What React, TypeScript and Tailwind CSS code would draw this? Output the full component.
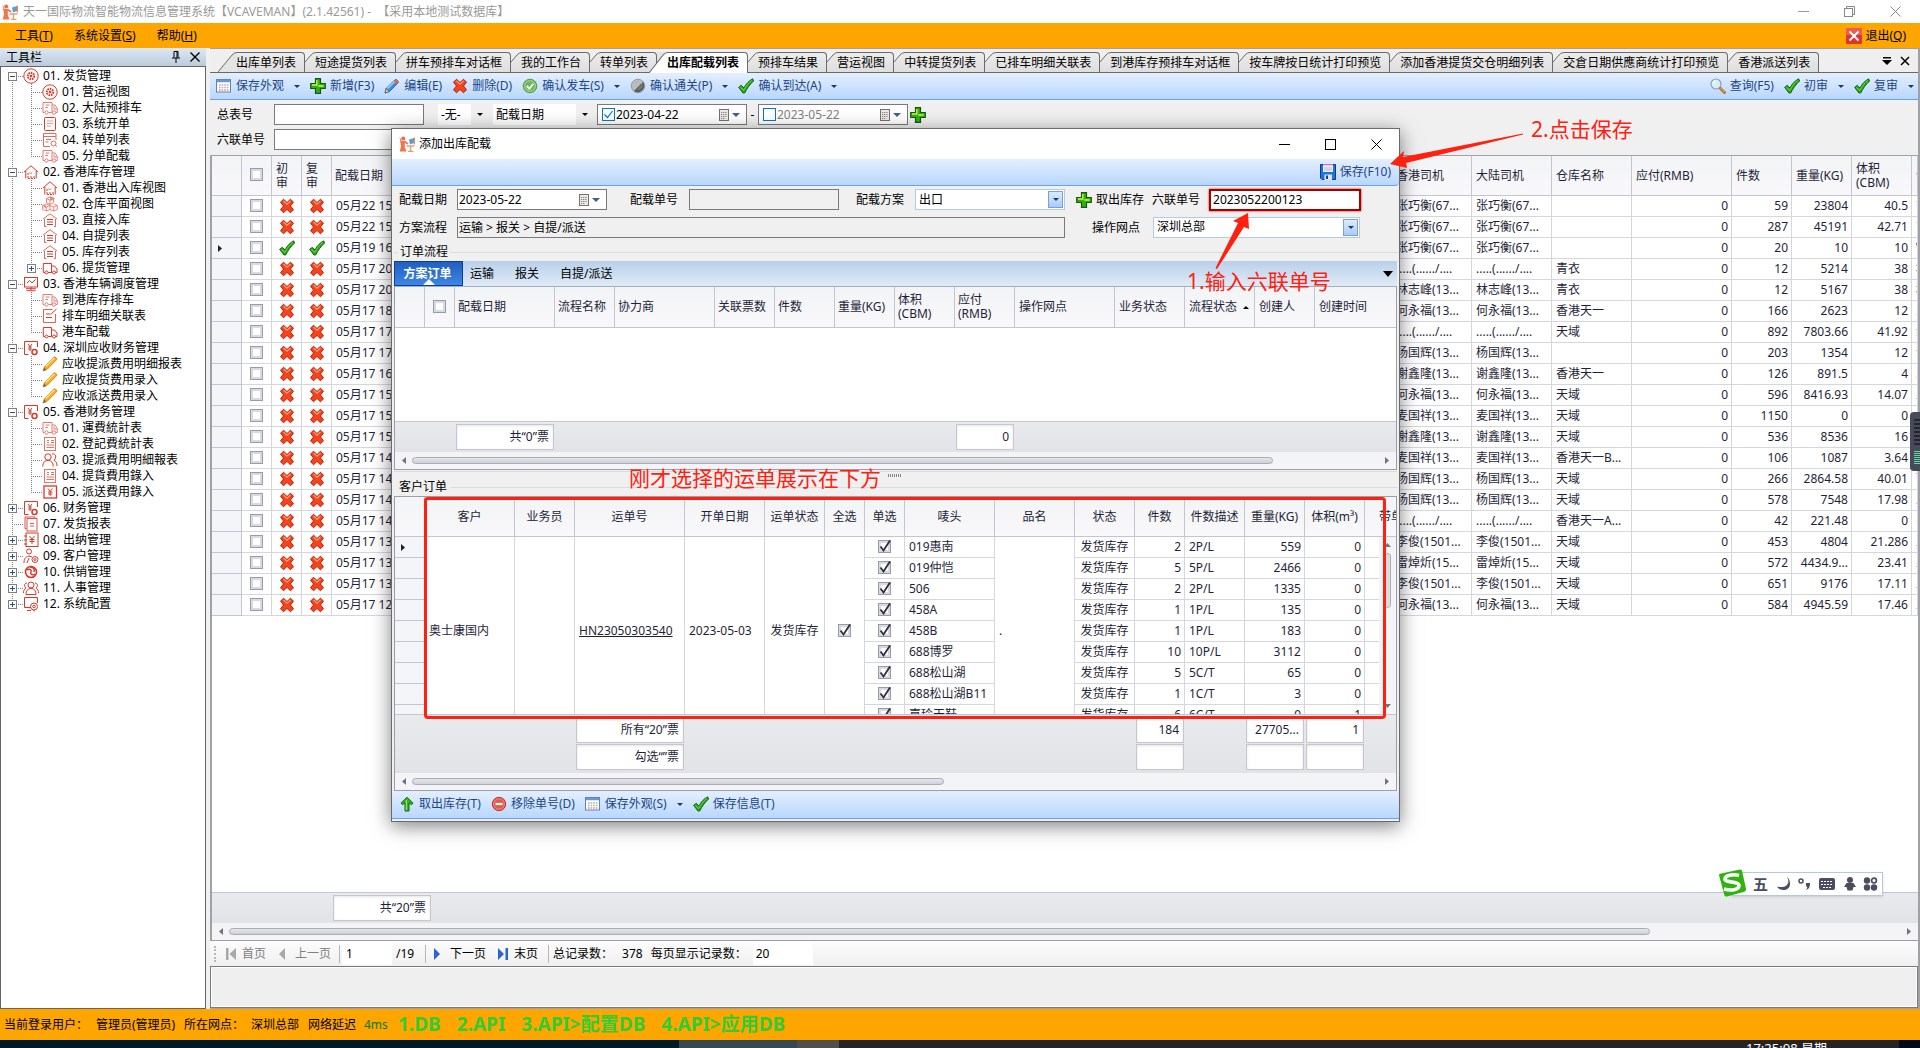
import type { ReactNode } from "react"

/* ---------- icons ---------- */

const treeShapes: Record<string, ReactNode> = {
  target: (
    <>
      <circle cx="8" cy="8" r="7.2" />
      <circle cx="8" cy="8" r="3.2" strokeWidth="2" strokeDasharray="1.6 0.8" />
      <circle cx="8" cy="8" r="1" fill="#d9392b" />
    </>
  ),
  truckList: (
    <g opacity="0.65">
      <path d="M1 12.5V2.5h9v10H6.500M1 12.500h1.500M10 5h3l2.300 3.500v4h-1.300M12 6.500v2.500h3M3.500 5h4M3.500 7.500h2.500" />
      <circle cx="4.500" cy="12.500" r="1.700" />
      <circle cx="12" cy="12.500" r="1.700" />
    </g>
  ),
  doc: (
    <>
      <rect x="2.500" y="1.500" width="11" height="13" rx="1" />
      <path d="M5 5h6M5 7.500h6M5 10h4" opacity="0.5" />
    </>
  ),
  docGear: (
    <g opacity="0.75">
      <path d="M14 8V1.500H1.500v13H8M1.500 4.500H14M4 7.500h5M3.500 10h3" />
      <circle cx="11.500" cy="11.500" r="2.500" />
      <path d="M13.500 13.500l1.500 1" />
    </g>
  ),
  house: (
    <>
      <path d="M1 8l7-6.200L15 8M2.800 7v7.500M13.200 7v7.500" />
      <path d="M5 14V9h1.500M8 14v-2M8 10V8.500M11 14v-3M5 14.500h7" strokeDasharray="2 1" />
    </>
  ),
  houseList: (
    <>
      <path d="M1 7l7-5.200L15 7M2.500 7v7.500h2M13.500 7v7.500h-1.500" opacity="0.75" />
      <path d="M5 7.500h6M5 10h6M5 12.500h6" />
    </>
  ),
  boxes: (
    <g opacity="0.6">
      <path d="M8 1l3.500 1.500v4L8 8.500 4.500 6.500v-4zM4.500 2.500L8 4.200l3.500-1.700M8 4.200v4.300M4.300 8L8 9.500v4L4.300 15 .7 13.500v-4zM11.700 8l3.600 1.500v4L11.700 15 8 13.500M.7 9.500l3.600 1.500L8 9.500l3.700 1.500 3.600-1.500M4.300 11v4M11.700 11v4" />
      <path d="M8 1l3 1.500L8 4M2 10l2 1" strokeWidth="2" />
    </g>
  ),
  truck: (
    <>
      <path d="M3 12.500H1.300V3.500h8.200v9H6M9.500 6h3l2.500 3v3.500h-1.500M9.500 12.500h1" />
      <circle cx="4.500" cy="12.500" r="1.500" />
      <circle cx="12" cy="12.500" r="1.500" />
    </>
  ),
  monitor: (
    <>
      <rect x="1.500" y="1.500" width="13" height="9.500" />
      <path d="M4 7l2.500-2.500L9 7l3.500-3.500M8 11v3M3 12.700h10M3.500 14.700h9" />
    </>
  ),
  docPen: (
    <>
      <path d="M13.500 6v8.500h-12v-13h9" opacity="0.8" />
      <path d="M4 6h4M4 9.500h6M8.500 6.500l6-5.500" />
    </>
  ),
  yuanGear: (
    <>
      <path d="M14.500 7V1.500h-13v13h4" />
      <path d="M5 4l2 2.500L9 4M7 6.500V11M5.200 7h3.600M5.200 9h3.600" />
      <circle cx="11.500" cy="12" r="2.500" strokeWidth="1.500" />
    </>
  ),
  bill: (
    <g opacity="0.7">
      <rect x="2.500" y="1.500" width="11" height="13" />
      <path d="M5 4.500h2M5 6.500h2M9 4.500h3M9 6.500h3M4.500 9h7.500M4.500 11.500h7.500" />
    </g>
  ),
  users: (
    <>
      <circle cx="6" cy="5" r="3.200" />
      <path d="M.8 14.500c0-4 2-6 5.200-6s5.200 2 5.200 6M10 2c4-1 5 4 2 6 2 1 3 3 3 6" />
    </>
  ),
  yuanBox: (
    <>
      <rect x="2" y="2" width="12.500" height="12" strokeWidth="1.300" />
      <path d="M6 4.500l2.200 3 2.200-3M8.200 7.500v4.500M6 8h4.500M6 10h4.500" />
    </>
  ),
  report: (
    <g opacity="0.85">
      <path d="M12 2V1H2v11.500h1.500" />
      <rect x="4" y="2.500" width="10" height="12.500" />
      <path d="M7 7.500h4M7 10h4" />
    </g>
  ),
  yuanBook: (
    <>
      <rect x="3" y="1" width="12" height="13.500" />
      <path d="M6.500 4l2.500 3 2.500-3M9 7v5M6.500 7.500h5M6.500 9.500h5M1 4h3M1 8h3M1 12h3" />
    </>
  ),
  userGear: (
    <>
      <circle cx="6" cy="3.500" r="2.500" />
      <path d="M1 15c0-4 1-6 5-7l3 1M4 15l2-5" />
      <circle cx="12" cy="11.500" r="3" />
      <circle cx="12" cy="11.500" r="1" />
    </>
  ),
  swirl: (
    <>
      <circle cx="8" cy="8" r="5.500" strokeWidth="1.600" />
      <path d="M4 6c3-2 5 0 4 2s1 4 4 2M7 3c3 0 5 2 4 5" strokeWidth="1.500" />
    </>
  ),
  people: (
    <>
      <circle cx="8" cy="5" r="3" />
      <path d="M3 14.500c0-4 2-6 5-6s5 2 5 6zM4 3C1 3 1 7 3 8c-2 1-2.500 3-2.500 5M12 3c3 0 3 4 1 5 2 1 2.500 3 2.500 5" />
    </>
  ),
  screenGear: (
    <>
      <path d="M14.500 7V1.500h-13v10H8M4 14.500h4" />
      <circle cx="11" cy="10.500" r="3.500" />
      <circle cx="11" cy="10.500" r="1.300" />
      <path d="M11 14v1.500M6.500 12l1-.5" />
    </>
  ),
}

function TreeIcon({ name }: { name: string }) {
  if (name === "pencil") {
    return (
      <svg className="size-4 shrink-0" viewBox="0 0 16 16">
        <path d="M1 15l1.500-4.500L12 1c1-.7 3.500 1.200 2.800 2.500L5.500 13z" fill="#f6a821" stroke="#c77d10" strokeWidth="0.7" />
        <path d="M3.500 10.500L12.500 2" stroke="#ffe08a" strokeWidth="1.400" />
        <path d="M1 15l1.200-3.500L4.500 14z" fill="#7a6a58" />
      </svg>
    )
  }
  return (
    <svg className="size-4 shrink-0" viewBox="0 0 16 16" fill="none" stroke="#d9392b" strokeWidth="1">
      {treeShapes[name]}
    </svg>
  )
}

function LogoIcon() {
  return (
    <svg className="size-4 shrink-0" viewBox="0 0 16 16">
      <circle cx="4.200" cy="2.600" r="2" fill="#ee6c45" />
      <path d="M.5.500L2.500 5h4l3 2.200-.6 1.200L5.800 7v4l1.700 4.500H.8L2 10 1 4z" fill="#f0764b" />
      <path d="M7.500 10h8M11.500 10v5M9 15.400h5.500" stroke="#f09a78" strokeWidth="1.400" />
      <path d="M10 3.500l5-1.500v5l-4 1.500z" fill="#5b9fcf" />
      <path d="M15.300 1.500v7" stroke="#ee6c45" />
    </svg>
  )
}

function CalendarIcon() {
  return (
    <svg className="size-4 shrink-0" viewBox="0 0 16 16">
      <rect x="0.500" y="1.500" width="14" height="12.500" fill="#fff" stroke="#5f83b5" />
      <path d="M1 3h13" stroke="#6f97cf" strokeWidth="2.500" />
      <path d="M3 7h10" stroke="#8fb5e6" strokeWidth="1.600" strokeDasharray="1.600 1" />
      <path d="M3 9.500h10" stroke="#e0b060" strokeWidth="1.600" strokeDasharray="1.600 1" />
      <path d="M3 12h10" stroke="#c58fb8" strokeWidth="1.600" strokeDasharray="1.600 1" />
    </svg>
  )
}

function PlusIcon() {
  return (
    <svg className="size-4 shrink-0" viewBox="0 0 16 16">
      <path d="M5.500.7h5v4.800h4.800v5h-4.800v4.800h-5v-4.800H.7v-5h4.800z" fill="#2fae1d" stroke="#17590c" strokeWidth="1.200" />
      <path d="M6.800 2v5H2M8.200 8h5.500" stroke="#d4f23a" strokeWidth="1.400" fill="none" />
    </svg>
  )
}

function CrossIcon() {
  return (
    <svg className="size-4 shrink-0" viewBox="0 0 16 16">
      <path
        d="M4.500 1.200L8 4.500l3.500-3.300 3 3L11.500 8l3 3.800-3 3L8 11.500l-3.500 3.300-3-3L4.500 8l-3-3.800z"
        fill="#f5431b"
        stroke="#a01c08"
        strokeWidth="0.900"
        strokeLinejoin="round"
      />
      <path d="M4.500 3L8 6.200 11.500 3" stroke="#ff9d78" strokeWidth="1.200" fill="none" />
    </svg>
  )
}

function TickIcon() {
  return (
    <svg className="size-4 shrink-0" viewBox="0 0 16 16">
      <path
        d="M.6 9.300l2.700-2 2.700 2.700C8.200 5.500 11.500 2.500 14.700.8l.9 2.200C11.800 6.500 9.300 10 6.700 15H4.900z"
        fill="#2aa81a"
        stroke="#0f5c08"
        strokeWidth="0.900"
        strokeLinejoin="round"
      />
      <path d="M2.200 9.400l3.500 3C8 8 10.500 5 13.700 2.500" stroke="#6fdc4c" strokeWidth="0.900" fill="none" />
    </svg>
  )
}

function PencilIcon() {
  return (
    <svg className="size-4 shrink-0" viewBox="0 0 16 16">
      <path d="M1 15l1.200-4.500L11 1.700c1.200-.9 4 1.600 3.200 3L5.500 13.500z" fill="#3c8ee6" stroke="#1b4f98" strokeWidth="0.800" />
      <path d="M3.500 10.500l8-8" stroke="#a9d4ff" strokeWidth="1.400" />
      <path d="M11 1.700c1.200-.9 4 1.600 3.200 3l-1.400 1.300L9.700 3z" fill="#e8683c" />
      <path d="M1 15l1.200-4.300 3.100 2.800z" fill="#f3d9a6" stroke="#333" strokeWidth="0.500" />
    </svg>
  )
}

function RoundTickIcon() {
  return (
    <svg className="size-4 shrink-0" viewBox="0 0 16 16">
      <circle cx="8" cy="8" r="6.800" fill="#6bb75a" stroke="#5b9c4c" />
      <circle cx="8" cy="8" r="5.300" fill="none" stroke="#b7e0ab" strokeWidth="0.800" />
      <path d="M4.800 8l2.500 2.600 4-4.800" stroke="#fff" strokeWidth="1.900" fill="none" />
    </svg>
  )
}

function GrayBallIcon() {
  return (
    <svg className="size-4 shrink-0" viewBox="0 0 16 16">
      <circle cx="8" cy="8" r="6.800" fill="#b9bbbd" stroke="#98999b" />
      <path d="M13 4A6.500 6.500 0 0 1 4 13z" fill="#55585b" />
      <path d="M13 5c1 4-3 8-7 7.500z" fill="#77797c" />
    </svg>
  )
}

function SearchIcon() {
  return (
    <svg className="size-4 shrink-0" viewBox="0 0 16 16">
      <path d="M9.500 9.500l5 5" stroke="#b9752c" strokeWidth="3" strokeLinecap="round" />
      <path d="M10.500 10l4 4" stroke="#f0b85c" strokeWidth="1" />
      <circle cx="6" cy="6" r="5" fill="#dcebf8" stroke="#8aa0b5" strokeWidth="1.200" />
      <path d="M3 6a3 3 0 0 1 3-3" stroke="#fff" strokeWidth="1.200" fill="none" />
    </svg>
  )
}

function DiskIcon() {
  return (
    <svg className="size-4 shrink-0" viewBox="0 0 16 16">
      <path d="M.5.5h15v15H2L.5 14z" fill="#1976e0" stroke="#0b3c8c" />
      <path d="M3 0h10v8H3z" fill="#f4f0fc" />
      <path d="M3 .7h10" stroke="#d86ef0" strokeWidth="1.400" />
      <path d="M4 4h8M4 6h8" stroke="#b6b3d0" />
      <path d="M4.500 10.500h7.500V16H4.500z" fill="#dfe7f3" />
      <path d="M6 11.500h2V15H6z" fill="#0d3f96" />
    </svg>
  )
}

function UpIcon() {
  return (
    <svg className="size-4 shrink-0" viewBox="0 0 16 16">
      <path d="M8 1.200l6 6-1.700 1.500-2.300-2V15H6V6.700l-2.300 2L2 7.200z" fill="#35b51f" stroke="#14610b" />
      <path d="M7.300 4v10" stroke="#a4f07f" />
    </svg>
  )
}

function MinusIcon() {
  return (
    <svg className="size-4 shrink-0" viewBox="0 0 16 16">
      <circle cx="8" cy="8" r="6.700" fill="#e5584b" stroke="#b93b32" />
      <circle cx="8" cy="8" r="5.300" fill="none" stroke="#f39e94" strokeWidth="0.700" />
      <path d="M4.500 8h7" stroke="#fff" strokeWidth="2.200" />
    </svg>
  )
}

function Caret({ className = "text-[#1e395b]" }: { className?: string }) {
  return (
    <svg className={`h-[3px] w-1.5 shrink-0 ${className}`} viewBox="0 0 6 3" fill="currentColor">
      <path d="M0 0h6L3 3z" />
    </svg>
  )
}

function SideArrow({ dir, className = "text-[#70727e]" }: { dir: "left" | "right"; className?: string }) {
  return (
    <svg className={`h-[7px] w-1 shrink-0 ${className}`} viewBox="0 0 4 7" fill="currentColor">
      <path d={dir === "left" ? "M4 0v7L0 3.500z" : "M0 0v7l4-3.500z"} />
    </svg>
  )
}

/* ---------- small controls ---------- */

function ToolButton({ icon, label, menu }: { icon: ReactNode; label: string; menu?: boolean }) {
  return (
    <button className="flex items-center gap-1 whitespace-nowrap text-[#1c4587]">
      {icon}
      <span>{label}</span>
      {menu && (
        <span className="flex w-3 justify-end">
          <Caret />
        </span>
      )}
    </button>
  )
}

function GridCheck({ label, checked = false }: { label: string; checked?: boolean }) {
  return (
    <span className="relative mb-0.5 inline-flex align-middle">
      <input
        type="checkbox"
        aria-label={label}
        defaultChecked={checked}
        className="size-[13px] appearance-none border border-[#989bab] bg-white shadow-[inset_0_0_0_2px_#d8dae3]"
      />
      {checked && (
        <svg className="pointer-events-none absolute inset-0 size-[13px]" viewBox="0 0 13 13">
          <path d="M2.500 6.500l3 4L12 .5" stroke="#2d2d3c" strokeWidth="1.800" fill="none" />
        </svg>
      )}
    </span>
  )
}

function ScrollBar({ thumb }: { thumb: string }) {
  return (
    <div className="flex h-[18px] items-center gap-1.5 border-b border-[#9a9dab] bg-[#f4f4f7] px-[7px]">
      <SideArrow dir="left" />
      <div className="flex-1">
        <div className={`h-[7px] rounded-full border border-[#a9abb6] bg-linear-to-b from-[#e6e7eb] to-[#cfd0d8] ${thumb}`} />
      </div>
      <SideArrow dir="right" />
    </div>
  )
}

function SumBox({ children }: { children?: ReactNode }) {
  return (
    <div className="mx-px h-[26px] border border-[#c5c6ce] bg-white px-1 text-right leading-6 text-[#1f1f3a] shadow-[inset_0_1px_3px_#e4e4ea]">
      {children}
    </div>
  )
}

function DateBox({ id, label, value, check, width, dim }: { id: string; label: string; value: string; check?: boolean; width: string; dim?: boolean }) {
  return (
    <div className={`flex h-[21px] items-center border border-[#7a7a7a] bg-white ${width}`}>
      {check !== undefined && (
        <span className="relative ml-1 flex">
          <input type="checkbox" aria-label={label} defaultChecked={check} className="size-[13px] appearance-none border border-[#0078d7] bg-white" />
          {check && (
            <svg className="pointer-events-none absolute inset-0 size-[13px]" viewBox="0 0 13 13">
              <path d="M2.500 6.500l3 3L10.500 3" stroke="#0078d7" strokeWidth="1.200" fill="none" />
            </svg>
          )}
        </span>
      )}
      <input
        id={id}
        aria-label={label}
        defaultValue={value}
        className={`min-w-0 flex-1 bg-transparent pl-px text-xs outline-none ${dim ? "text-[#808080]" : "text-black"}`}
      />
      <svg className="mr-[3px] h-3.5 w-2.5" viewBox="0 0 10 14">
        <rect x="0.500" y="1.500" width="9" height="11" fill="#eceae6" stroke="#77706c" />
        <path d="M2 4.500h6M2 6.500h6M2 8.500h6M2 10.500h4" stroke="#8b8a92" strokeDasharray="1.200 0.600" />
      </svg>
      <svg className="mr-1.5 h-1 w-2" viewBox="0 0 8 4" fill="#40608c">
        <path d="M0 0h8L4 4z" />
      </svg>
    </div>
  )
}

/* ---------- left tree ---------- */

type Node = { text: string; icon: string; state?: "open" | "closed"; kids?: Node[] }

const tree: Node[] = [
  {
    text: "01. 发货管理", icon: "target", state: "open",
    kids: [
      { text: "01. 营运视图", icon: "target" },
      { text: "02. 大陆预排车", icon: "truckList" },
      { text: "03. 系统开单", icon: "doc" },
      { text: "04. 转单列表", icon: "docGear" },
      { text: "05. 分单配载", icon: "truckList" },
    ],
  },
  {
    text: "02. 香港库存管理", icon: "house", state: "open",
    kids: [
      { text: "01. 香港出入库视图", icon: "house" },
      { text: "02. 仓库平面视图", icon: "boxes" },
      { text: "03. 直接入库", icon: "houseList" },
      { text: "04. 自提列表", icon: "houseList" },
      { text: "05. 库存列表", icon: "houseList" },
      { text: "06. 提货管理", icon: "truck", state: "closed" },
    ],
  },
  {
    text: "03. 香港车辆调度管理", icon: "monitor", state: "open",
    kids: [
      { text: "到港库存排车", icon: "truckList" },
      { text: "排车明细关联表", icon: "docPen" },
      { text: "港车配载", icon: "truck" },
    ],
  },
  {
    text: "04. 深圳应收财务管理", icon: "yuanGear", state: "open",
    kids: [
      { text: "应收提派费用明细报表", icon: "pencil" },
      { text: "应收提货费用录入", icon: "pencil" },
      { text: "应收派送费用录入", icon: "pencil" },
    ],
  },
  {
    text: "05. 香港财务管理", icon: "yuanGear", state: "open",
    kids: [
      { text: "01. 運費統計表", icon: "truckList" },
      { text: "02. 登記費統計表", icon: "bill" },
      { text: "03. 提派費用明細報表", icon: "users" },
      { text: "04. 提貨費用錄入", icon: "bill" },
      { text: "05. 派送費用錄入", icon: "yuanBox" },
    ],
  },
  { text: "06. 财务管理", icon: "yuanGear", state: "closed" },
  { text: "07. 发货报表", icon: "report" },
  { text: "08. 出纳管理", icon: "yuanBook", state: "closed" },
  { text: "09. 客户管理", icon: "userGear", state: "closed" },
  { text: "10. 供销管理", icon: "swirl", state: "closed" },
  { text: "11. 人事管理", icon: "people", state: "closed" },
  { text: "12. 系统配置", icon: "screenGear", state: "closed" },
]

function Branch({ child = false, first = false, last, state }: { child?: boolean; first?: boolean; last: boolean; state?: string }) {
  const w = child ? 41 : 22
  const x = child ? 30 : 11
  return (
    <svg className={`h-4 shrink-0 ${child ? "w-[41px]" : "w-[22px]"}`} viewBox={`0 0 ${w} 16`} shapeRendering="crispEdges">
      <g stroke="#808080" strokeDasharray="1 1">
        {child && <path d="M11.500 0v16" />}
        <path d={`M${x + 0.5} ${first ? 8 : 0}V${last ? 8 : 16}`} />
        <path d={`M${x} 8.500H${w}`} />
      </g>
      {state && (
        <>
          <rect x={x - 3.5} y="4.500" width="8" height="8" fill="#fff" stroke="#808080" />
          <path d={`M${x - 2} 8.500h5`} stroke="#2a4a9c" />
          {state === "closed" && <path d={`M${x + 0.5} 6v5`} stroke="#2a4a9c" />}
        </>
      )}
    </svg>
  )
}

function Tree() {
  return (
    <ul className="text-black">
      {tree.map((n, i) => (
        <li key={n.text}>
          <div className="flex h-4 items-center whitespace-nowrap leading-4">
            <Branch first={i === 0} last={i === tree.length - 1} state={n.state} />
            <TreeIcon name={n.icon} />
            <span className="ml-1">{n.text}</span>
          </div>
          {n.kids && (
            <ul>
              {n.kids.map((k, j) => (
                <li key={k.text} className="flex h-4 items-center whitespace-nowrap leading-4">
                  <Branch child last={j === n.kids!.length - 1} state={k.state} />
                  <TreeIcon name={k.icon} />
                  <span className="ml-1">{k.text}</span>
                </li>
              ))}
            </ul>
          )}
        </li>
      ))}
    </ul>
  )
}

/* ---------- document tabs ---------- */

const tabs = [
  "出库单列表", "短途提货列表", "拼车预排车对话框", "我的工作台", "转单列表", "出库配载列表", "预排车结果", "营运视图", "中转提货列表",
  "已排车明细关联表", "到港库存预排车对话框", "按车牌按日统计打印预览", "添加香港提货交仓明细列表", "交倉日期供應商统计打印预览", "香港派送列表",
]

function DocTabs() {
  return (
    <div className="flex h-6 items-end border-b border-[#6b6b5c] bg-[#efefef] pl-4" role="tablist">
      {tabs.map((t, i) => {
        const active = t === "出库配载列表"
        const wide = active || i === 0
        return (
          <button
            key={t}
            role="tab"
            aria-selected={active}
            className={`relative flex h-5 items-center whitespace-nowrap rounded-tr-sm border-r border-t border-[#6b6b6b] pl-2.5 pr-2 leading-5 text-black ${
              active ? "-mb-px h-[21px] bg-white font-bold" : "bg-linear-to-b from-[#ececec] to-[#dedede]"
            }`}
          >
            {wide ? (
              <svg className={`absolute -left-2 -top-px w-[19px] ${active ? "h-[21px]" : "h-5"}`} viewBox="0 0 19 20" preserveAspectRatio="none">
                <path d="M8 0h11L17 2 8 12z" fill={active ? "#e4e4e4" : "#efefef"} />
                <path d="M0 20L14 3q2-2.500 5-2.500V20z" fill={active ? "#fff" : "#e4e4e4"} />
                <path d="M0 20L14 3q2-2.500 5-2.500" fill="none" stroke="#6b6b6b" />
              </svg>
            ) : (
              <svg className="absolute -top-px left-0 h-3 w-[11px]" viewBox="0 0 11 12">
                <path d="M0 0h11v.5Q8 .5 6 3L0 10z" fill="#efefef" />
                <path d="M0 10L6 3Q8 .5 11 .5" fill="none" stroke="#6b6b6b" />
              </svg>
            )}
            <span className="relative">{t}</span>
          </button>
        )
      })}
      <div className="ml-auto mr-2 flex h-full items-center gap-2">
        <svg className="h-2 w-2.5" viewBox="0 0 10 8">
          <path d="M1 0h8v1.500H1zM0 3h10L5 8z" />
        </svg>
        <svg className="size-2.5" viewBox="0 0 10 10">
          <path d="M1 1l8 8M9 1L1 9" stroke="#000" strokeWidth="1.500" />
        </svg>
      </div>
    </div>
  )
}

/* ---------- main grid ---------- */

type Row = [date: string, driver: string, store: string, qty: string, kg: string, cbm: string, tail: string]

const rows: Row[] = [
  ["05月22 15", "张巧衡(67...", "", "59", "23804", "40.5", "管"],
  ["05月22 15", "张巧衡(67...", "", "287", "45191", "42.71", "管"],
  ["05月19 16", "张巧衡(67...", "", "20", "10", "10", "W"],
  ["05月17 20", ".....(....../....", "青衣", "12", "5214", "38", "林"],
  ["05月17 20", "林志峰(13...", "青衣", "12", "5167", "38", "林"],
  ["05月17 18", "何永福(13...", "香港天一", "166", "2623", "12", "人"],
  ["05月17 17", ".....(....../....", "天域", "892", "7803.66", "41.92", "汪"],
  ["05月17 17", "杨国辉(13...", "", "203", "1354", "12", "汪"],
  ["05月17 16", "谢鑫隆(13...", "香港天一", "126", "891.5", "4", "人"],
  ["05月17 15", "何永福(13...", "天域", "596", "8416.93", "14.07", "王"],
  ["05月17 15", "麦国祥(13...", "天域", "1150", "0", "0", "王"],
  ["05月17 15", "谢鑫隆(13...", "天域", "536", "8536", "16", "王"],
  ["05月17 14", "麦国祥(13...", "香港天一B...", "106", "1087", "3.64", "王"],
  ["05月17 14", "杨国辉(13...", "天域", "266", "2864.58", "40.01", "可"],
  ["05月17 14", "杨国辉(13...", "天域", "578", "7548", "17.98", "王"],
  ["05月17 14", ".....(....../....", "香港天一A...", "42", "221.48", "0", "张"],
  ["05月17 13", "李俊(1501...", "天域", "453", "4804", "21.286", "王"],
  ["05月17 13", "雷焯炘(15...", "天域", "572", "4434.9...", "23.41", "王"],
  ["05月17 13", "李俊(1501...", "天域", "651", "9176", "17.11", "王"],
  ["05月17 12", "何永福(13...", "天域", "584", "4945.59", "17.46", "王"],
]

const th = "overflow-hidden whitespace-nowrap border-b border-r border-[#c3c5d1] bg-linear-to-b from-[#f3f4f6] to-[#f8f8fa] p-0 font-normal leading-[14px]"
const td = "h-[21px] overflow-hidden whitespace-nowrap border-b border-r border-[#d5d6de] p-0 leading-5"
const lead = "border-b border-r border-[#c3c5d1] bg-[#f4f5f8] p-0"

function RowMark() {
  return (
    <svg className="ml-1.5 h-[7px] w-1" viewBox="0 0 4 7">
      <path d="M0 0v7l4-3.500z" fill="#1f1f2a" />
    </svg>
  )
}

function MainGrid() {
  return (
    <table className="w-full table-fixed border-separate border-spacing-0 text-[#1f1f3a]">
      <colgroup>
        <col className="w-[30px]" />
        <col className="w-[30px]" />
        <col className="w-[30px]" />
        <col className="w-[30px]" />
        <col className="w-[100px]" />
        <col />
        <col className="w-[80px]" />
        <col className="w-[80px]" />
        <col className="w-[80px]" />
        <col className="w-[100px]" />
        <col className="w-[60px]" />
        <col className="w-[60px]" />
        <col className="w-[60px]" />
        <col className="w-[6px]" />
      </colgroup>
      <thead>
        <tr className="h-10 text-left">
          <th className={th} />
          <th className={`${th} text-center`}><GridCheck label="全选" /></th>
          <th className={`${th} pl-1`}>初<br />审</th>
          <th className={`${th} pl-1`}>复<br />审</th>
          <th className={`${th} pl-[3px]`}>配载日期</th>
          <th className={th} />
          <th className={`${th} pl-1`}>香港司机</th>
          <th className={`${th} pl-1`}>大陆司机</th>
          <th className={`${th} pl-1`}>仓库名称</th>
          <th className={`${th} pl-1`}>应付(RMB)</th>
          <th className={`${th} pl-1`}>件数</th>
          <th className={`${th} pl-1`}>重量(KG)</th>
          <th className={`${th} pl-1`}>体积<br />(CBM)</th>
          <th className={`${th} pl-1`}>创</th>
        </tr>
      </thead>
      <tbody>
        {rows.map(([date, driver, store, qty, kg, cbm, tail], i) => {
          const ok = i === 2
          const mark = <span className="flex justify-center">{ok ? <TickIcon /> : <CrossIcon />}</span>
          return (
            <tr key={i}>
              <td className={lead}>{ok && <RowMark />}</td>
              <td className={`${td} text-center`}><GridCheck label={`选择第${i + 1}行`} /></td>
              <td className={td}>{mark}</td>
              <td className={td}>{mark}</td>
              <td className={`${td} pl-1`}>{date}</td>
              <td className={td} />
              <td className={`${td} pl-1`}>{driver}</td>
              <td className={`${td} pl-1`}>{driver}</td>
              <td className={`${td} pl-1`}>{store}</td>
              <td className={`${td} pr-[3px] text-right`}>0</td>
              <td className={`${td} pr-[3px] text-right`}>{qty}</td>
              <td className={`${td} pr-[3px] text-right`}>{kg}</td>
              <td className={`${td} pr-[3px] text-right`}>{cbm}</td>
              <td className={`${td} pl-1`}>{tail}</td>
            </tr>
          )
        })}
      </tbody>
    </table>
  )
}

/* ---------- dialog ---------- */

const goods: [string, string, string, string, string][] = [
  ["019惠南", "2", "2P/L", "559", "0"],
  ["019仲恺", "5", "5P/L", "2466", "0"],
  ["506", "2", "2P/L", "1335", "0"],
  ["458A", "1", "1P/L", "135", "0"],
  ["458B", "1", "1P/L", "183", "0"],
  ["688博罗", "10", "10P/L", "3112", "0"],
  ["688松山湖", "5", "5C/T", "65", "0"],
  ["688松山湖B11", "1", "1C/T", "3", "0"],
  ["嘉玲天鞋", "6", "6C/T", "9", "1"],
]

function FlowGrid() {
  return (
    <div className="border-x border-[#9a9dab]">
      <table className="w-full table-fixed border-separate border-spacing-0 text-[#1f1f3a]">
        <colgroup>
          <col className="w-[30px]" />
          <col className="w-[30px]" />
          <col className="w-[100px]" />
          <col className="w-[60px]" />
          <col className="w-[100px]" />
          <col className="w-[60px]" />
          <col className="w-[60px]" />
          <col className="w-[60px]" />
          <col className="w-[60px]" />
          <col className="w-[60px]" />
          <col className="w-[100px]" />
          <col className="w-[70px]" />
          <col className="w-[70px]" />
          <col className="w-[60px]" />
          <col />
        </colgroup>
        <thead>
          <tr className="h-[41px] text-left">
            <th className={th} />
            <th className={`${th} text-center`}><GridCheck label="全选订单" /></th>
            <th className={`${th} pl-[3px]`}>配载日期</th>
            <th className={`${th} pl-[3px]`}>流程名称</th>
            <th className={`${th} pl-[3px]`}>协力商</th>
            <th className={`${th} pl-[3px]`}>关联票数</th>
            <th className={`${th} pl-[3px]`}>件数</th>
            <th className={`${th} pl-[3px]`}>重量(KG)</th>
            <th className={`${th} pl-[3px]`}>体积<br />(CBM)</th>
            <th className={`${th} pl-[3px]`}>应付<br />(RMB)</th>
            <th className={`${th} pl-1`}>操作网点</th>
            <th className={`${th} pl-1`}>业务状态</th>
            <th className={`${th} pl-1`}>
              流程状态
              <svg className="ml-1.5 inline h-[3px] w-1.5 align-middle" viewBox="0 0 6 3"><path d="M0 3h6L3 0z" /></svg>
            </th>
            <th className={`${th} pl-1`}>创建人</th>
            <th className={`${th} border-r-0 pl-1`}>创建时间</th>
          </tr>
        </thead>
      </table>
      <div className="h-[93px] bg-white" />
      <div className="flex h-[31px] border-t border-[#c3c5d1] bg-linear-to-b from-[#e9eaee] to-[#e2e3e7] pl-[60px] pt-0.5">
        <div className="w-[100px]"><SumBox>共“0”票</SumBox></div>
        <div className="ml-[400px] w-[60px]"><SumBox>0</SumBox></div>
      </div>
      <ScrollBar thumb="w-[89%]" />
    </div>
  )
}

function CustomerGrid() {
  const merged = `${td} align-middle`
  return (
    <div className="border-x border-t border-[#9a9dab]">
      <div className="relative h-[217px] overflow-hidden bg-white">
        <table className="w-full table-fixed border-separate border-spacing-0 text-[#1f1f3a]">
          <colgroup>
            <col className="w-[30px]" />
            <col className="w-[90px]" />
            <col className="w-[60px]" />
            <col className="w-[110px]" />
            <col className="w-[80px]" />
            <col className="w-[60px]" />
            <col className="w-[40px]" />
            <col className="w-[40px]" />
            <col className="w-[90px]" />
            <col className="w-[80px]" />
            <col className="w-[60px]" />
            <col className="w-[50px]" />
            <col className="w-[60px]" />
            <col className="w-[60px]" />
            <col className="w-[60px]" />
            <col />
          </colgroup>
          <thead>
            <tr className="h-10">
              <th className={th} />
              {["客户", "业务员", "运单号", "开单日期", "运单状态", "全选", "单选", "唛头", "品名", "状态", "件数", "件数描述", "重量(KG)", "体积(m³)"].map((h) => (
                <th key={h} className={th}>{h}</th>
              ))}
              <th className={`${th} border-r-0 pl-3.5 text-left`}>带单</th>
            </tr>
          </thead>
          <tbody>
            {goods.map(([mark, qty, desc, kg, cbm], i) => (
              <tr key={mark}>
                <td className={lead}>{i === 0 && <RowMark />}</td>
                {i === 0 && (
                  <>
                    <td rowSpan={9} className={`${merged} pl-1`}>奥士康国内</td>
                    <td rowSpan={9} className={merged} />
                    <td rowSpan={9} className={`${merged} pl-1`}>
                      <a href="#order" className="underline">HN23050303540</a>
                    </td>
                    <td rowSpan={9} className={`${merged} pl-1`}>2023-05-03</td>
                    <td rowSpan={9} className={`${merged} text-center`}>发货库存</td>
                    <td rowSpan={9} className={`${merged} text-center`}><GridCheck label="全选运单" checked /></td>
                  </>
                )}
                <td className={`${td} text-center`}><GridCheck label={mark} checked /></td>
                <td className={`${td} pl-1`}>{mark}</td>
                {i === 0 && <td rowSpan={9} className={`${merged} pl-1`}>.</td>}
                <td className={`${td} text-center`}>发货库存</td>
                <td className={`${td} pr-[3px] text-right`}>{qty}</td>
                <td className={`${td} pl-1`}>{desc}</td>
                <td className={`${td} pr-[3px] text-right`}>{kg}</td>
                <td className={`${td} pr-[3px] text-right`}>{cbm}</td>
                <td className={td} />
              </tr>
            ))}
          </tbody>
        </table>
        <div className="absolute bottom-0 right-0 top-10 flex w-[17px] flex-col items-center bg-[#f4f4f7] pt-1.5">
          <svg className="h-1 w-[7px]" viewBox="0 0 7 4"><path d="M0 4h7L3.500 0z" fill="#70727e" /></svg>
          <div className="mt-1.5 h-[55px] w-[7px] rounded-full border border-[#a9abb6] bg-[#dcdde3]" />
          <svg className="mb-1.5 mt-auto h-1 w-[7px]" viewBox="0 0 7 4"><path d="M0 0h7L3.500 4z" fill="#70727e" /></svg>
        </div>
      </div>
      <div className="grid h-[59px] grid-cols-[180px_110px_450px_50px_60px_60px_60px] content-start gap-y-px border-t border-[#c3c5d1] bg-linear-to-b from-[#e9eaee] to-[#e2e3e7] pt-0.5">
        <div className="col-start-2"><SumBox>所有“20”票</SumBox></div>
        <div className="col-start-4"><SumBox>184</SumBox></div>
        <div className="col-start-6"><SumBox>27705...</SumBox></div>
        <div className="col-start-7"><SumBox>1</SumBox></div>
        <div className="col-start-2"><SumBox>勾选“”票</SumBox></div>
        <div className="col-start-4"><SumBox /></div>
        <div className="col-start-6"><SumBox /></div>
        <div className="col-start-7"><SumBox /></div>
      </div>
      <ScrollBar thumb="w-[55%]" />
    </div>
  )
}

function ComboArrow() {
  return (
    <span className="pointer-events-none absolute bottom-0.5 right-0.5 top-0.5 flex w-[15px] items-center justify-center border border-[#7ea0cf] bg-linear-to-b from-[#dcebff] to-[#a9cbf8]">
      <Caret />
    </span>
  )
}

function Dialog() {
  return (
    <section
      role="dialog"
      aria-label="添加出库配载"
      className="absolute left-[391px] top-[128px] w-[1009px] border border-[#6a6a6a] bg-[#f0f0f0] shadow-[0_4px_18px_rgba(0,0,0,0.5)]"
    >
      <header className="flex h-[30px] items-center bg-white pl-[7px] text-black">
        <LogoIcon />
        <span className="ml-1 flex-1">添加出库配载</span>
        <button aria-label="最小化" className="flex w-[46px] justify-center">
          <svg className="size-[11px]" viewBox="0 0 11 11"><path d="M0 5.500h11" stroke="#000" /></svg>
        </button>
        <button aria-label="最大化" className="flex w-[46px] justify-center">
          <svg className="size-[11px]" viewBox="0 0 11 11"><rect x="0.500" y="0.500" width="10" height="10" fill="none" stroke="#000" /></svg>
        </button>
        <button aria-label="关闭" className="flex w-[46px] justify-center">
          <svg className="size-[11px]" viewBox="0 0 11 11"><path d="M.5.5l10 10M10.500.5l-10 10" stroke="#000" /></svg>
        </button>
      </header>
      <div className="flex h-[27px] items-center justify-end rounded-br-sm border-b border-[#6ba2ee] bg-linear-to-b from-[#e3efff] to-[#b9d7ff] pr-2">
        <ToolButton icon={<DiskIcon />} label="保存(F10)" />
      </div>

      <form className="flex flex-col gap-[7px] pb-px pl-[7px] pt-[3px] text-black">
        <div className="flex h-[21px] items-center">
          <label htmlFor="d-date" className="w-[58px]">配载日期</label>
          <DateBox id="d-date" label="配载日期" value="2023-05-22" width="w-[150px]" />
          <label htmlFor="d-no" className="ml-[23px] w-[59px]">配载单号</label>
          <input id="d-no" className="h-[21px] w-[150px] border border-[#7a7a7a] bg-[#f0f0f0] outline-none" />
          <label htmlFor="d-plan" className="ml-[17px] w-[59px]">配载方案</label>
          <span className="relative flex">
            <select id="d-plan" className="h-[21px] w-[150px] appearance-none border border-[#b3cbe8] bg-white pl-[3px] leading-[18px]">
              <option>出口</option>
            </select>
            <ComboArrow />
          </span>
          <button type="button" className="ml-[11px] flex items-center gap-1">
            <PlusIcon />
            取出库存
          </button>
          <label htmlFor="d-six" className="ml-2 w-[57px]">六联单号</label>
          <input
            id="d-six"
            defaultValue="2023052200123"
            className="h-[22px] w-[152px] border-2 border-[#a80000] bg-white pl-0.5 shadow-[0_0_2px_#d00000] outline-none"
          />
        </div>
        <div className="flex h-[21px] items-center">
          <label htmlFor="d-flow" className="w-[58px]">方案流程</label>
          <input id="d-flow" readOnly defaultValue="运输 > 报关 > 自提/派送" className="h-[21px] w-[608px] border border-[#7a7a7a] bg-[#f0f0f0] pb-0.5 pl-px outline-none" />
          <label htmlFor="d-site" className="ml-[27px] w-[61px]">操作网点</label>
          <span className="relative flex">
            <select id="d-site" className="h-[21px] w-[207px] appearance-none border border-[#b3cbe8] bg-white pb-0.5 pl-[3px] leading-[16px]">
              <option>深圳总部</option>
            </select>
            <ComboArrow />
          </span>
        </div>
      </form>

      <div className="flex h-[22px] items-center gap-0.5 pl-0.5 pt-1">
        <span className="w-1 border-t border-[#dcdcdc]" />
        <h2 className="leading-4 text-black">订单流程</h2>
        <span className="flex-1 border-t border-[#dcdcdc]" />
      </div>
      <div className="px-0.5">
        <div role="tablist" className="flex h-[26px] items-stretch border-b border-[#9fb0c6] bg-linear-to-b from-[#b9d0ea] to-[#e0eaf6] text-black">
          <button role="tab" aria-selected="true" className="relative w-[69px] border border-[#0b3f96] bg-linear-to-b from-[#1f5fbf] to-[#3f86e6] pr-0.5 font-bold text-white">
            方案订单
            <svg className="absolute bottom-0 left-1/2 -ml-1.5 h-1.5 w-3" viewBox="0 0 12 6" fill="#fff"><path d="M0 6h12L6 0z" /></svg>
          </button>
          <button role="tab" aria-selected="false" className="ml-[7px]">运输</button>
          <button role="tab" aria-selected="false" className="ml-[21px]">报关</button>
          <button role="tab" aria-selected="false" className="ml-[21px]">自提/派送</button>
          <svg className="ml-auto mr-1 h-1.5 w-2.5 self-center" viewBox="0 0 10 6"><path d="M0 0h10L5 6z" /></svg>
        </div>
        <FlowGrid />
      </div>

      <div className="flex h-[26px] flex-col px-0.5">
        <div className="mt-px border-t border-[#dcdcdc]" />
        <div className="flex h-6 shrink-0 items-center gap-1 pl-[5px] pt-1.5">
          <h2 className="leading-4 text-black">客户订单</h2>
          <span className="flex-1 border-t border-[#dcdcdc]" />
        </div>
      </div>
      <div className="px-0.5">
        <CustomerGrid />
      </div>

      <footer className="mb-0.5 flex h-7 items-center gap-2.5 border-b border-[#6ba2ee] bg-linear-to-b from-[#e3efff] to-[#b9d7ff] pb-px pl-[7px]">
        <ToolButton icon={<UpIcon />} label="取出库存(T)" />
        <ToolButton icon={<MinusIcon />} label="移除单号(D)" />
        <ToolButton icon={<CalendarIcon />} label="保存外观(S)" menu />
        <ToolButton icon={<TickIcon />} label="保存信息(T)" />
      </footer>
    </section>
  )
}

/* ---------- red notes on top of the windows ---------- */

function Notes() {
  const text = "pointer-events-none absolute whitespace-nowrap text-[21px] leading-6 text-[#ff2010]"
  return (
    <>
      <div className="pointer-events-none absolute left-[424px] top-[497px] h-[222px] w-[962px] rounded-sm border-[3px] border-[#ff2010]" />
      <svg className="pointer-events-none absolute left-[1200px] top-[120px] h-[160px] w-[330px]" viewBox="1200 120 330 160" fill="#ff2010">
        <path d="M1390 164l14-13-1 6 120-23.500v1L1406 163l1 5z" />
        <path d="M1248 213l1 16-5-2-27 42-1.500-1L1238 223l-5-2z" />
      </svg>
      <p className={`${text} left-[1531px] top-[117px]`}>2.点击保存</p>
      <p className={`${text} left-[1187px] top-[269px]`}>1.输入六联单号</p>
      <p className={`${text} left-[629px] top-[466px]`}>刚才选择的运单展示在下方</p>
      <svg className="absolute left-[888px] top-[474px] h-[3px] w-3.5" viewBox="0 0 14 3">
        <path d="M0 1.500h14" stroke="#888" strokeWidth="3" strokeDasharray="1 1" />
      </svg>
    </>
  )
}

function InputMethodBar() {
  return (
    <div className="absolute right-[37px] top-[872px] flex h-6 w-[152px] items-center border border-[#b5c8dc] bg-white pl-[21px] text-[#4a4d63] shadow">
      <svg className="absolute -left-3.5 -top-1 size-7" viewBox="0 0 28 28">
        <path d="M1 6q0-1 1-1.300L22 .5q1.500 0 2 1.300l4 18q.3 2-1.500 3L9 27.500q-2 .3-2.700-1.500z" fill="#2fb40f" />
        <path d="M21 6.500c-6-1.500-14-.5-14 3.500s14 2 14 6.500-8 5.500-15 3.500" fill="none" stroke="#fff" strokeWidth="3.600" />
      </svg>
      <span className="text-[15px] font-bold leading-none">五</span>
      <svg className="ml-2 h-4 w-[104px] shrink-0" viewBox="0 0 104 16" fill="currentColor">
        <path d="M11 1c4 6-1 12-10 9.500C4 16 14 15 14 8c0-3-1-5.500-3-7z" />
        <circle cx="25" cy="5" r="2" fill="none" stroke="currentColor" strokeWidth="1.500" />
        <path d="M30 7h4c0 4-1 6-4 7 1-1.500 1.500-2.500 1-3.500h-1z" />
        <rect x="43" y="2" width="16" height="12" rx="2" />
        <path d="M45 5.500h12M45 8.500h12M47 11.500h8" stroke="#fff" strokeWidth="1.200" strokeDasharray="2 1" />
        <circle cx="74" cy="4" r="3" />
        <path d="M70.500 7h7l2.500 4h-2.500l-1 3.500h-5L70.500 11H68z" />
        <circle cx="91" cy="4.500" r="3.200" />
        <circle cx="98" cy="4.500" r="2.400" fill="none" stroke="currentColor" strokeWidth="1.700" />
        <circle cx="91" cy="11.500" r="3.200" />
        <circle cx="98" cy="11.500" r="3.200" />
      </svg>
    </div>
  )
}

/* ---------- page ---------- */

function Pager() {
  const sep = <span className="mx-1 h-[18px] border-l border-[#b5b5b5]" />
  return (
    <nav className="flex h-[25px] items-center bg-linear-to-b from-[#fcfcfc] to-[#f0f0f0] pl-1 text-black">
      <span className="h-4 border-l-2 border-dotted border-[#b8b8b8]" />
      <button className="ml-2.5 flex w-[53px] items-center gap-1.5 text-[#808080]">
        <svg className="h-3 w-2.5" viewBox="0 0 10 12" fill="#a8a8a8"><path d="M0 0h2.500v12H0zM10 0v12L3.500 6z" /></svg>
        首页
      </button>
      <button className="flex items-center gap-2.5 text-[#808080]">
        <svg className="h-3 w-1.5" viewBox="0 0 6 12" fill="#a8a8a8"><path d="M6 0v12L0 6z" /></svg>
        上一页
      </button>
      <span className="ml-2 h-[18px] border-l border-[#b5b5b5]" />
      <input aria-label="页码" defaultValue="1" className="ml-0.5 h-[23px] w-[50px] bg-white pl-1 outline-none" />
      <span className="ml-1 w-[25px]">/19</span>
      {sep}
      <button className="ml-1 flex items-center gap-2.5">
        <svg className="h-3 w-1.5" viewBox="0 0 6 12" fill="#2a62d8"><path d="M0 0v12l6-6z" /></svg>
        下一页
      </button>
      <button className="ml-3 mr-1.5 flex items-center gap-1.5">
        <svg className="h-3 w-2.5" viewBox="0 0 10 12" fill="#2a62d8"><path d="M0 0v12l6-6zM7.500 0H10v12H7.500z" /></svg>
        末页
      </button>
      {sep}
      <span className="w-[69px]">总记录数：</span>
      <span>378</span>
      <label htmlFor="page-size" className="ml-2 w-[102px]">每页显示记录数：</label>
      <input id="page-size" defaultValue="20" className="h-[23px] w-[60px] bg-white pl-[3px] outline-none" />
    </nav>
  )
}

function FilterSelect({ id, label, value, width }: { id: string; label: string; value: string; width: string }) {
  return (
    <span className="relative flex">
      <select id={id} aria-label={label} className={`h-[21px] appearance-none bg-white pl-[3px] ${width}`}>
        <option>{value}</option>
      </select>
      <span className="pointer-events-none absolute inset-y-0 right-0 flex w-[17px] items-center justify-center bg-[#f0f0f0]">
        <Caret className="text-black" />
      </span>
    </span>
  )
}

export default function App() {
  return (
    <div className="relative flex h-screen flex-col overflow-hidden bg-[#f0f0f0] font-['Noto_Sans','Noto_Sans_CJK_SC',sans-serif] text-xs">
      <header className="flex h-[23px] shrink-0 items-center bg-white pl-0.5 text-[#999999]">
        <LogoIcon />
        <h1 className="ml-[5px] flex-1">天一国际物流智能物流信息管理系统【VCAVEMAN】(2.1.42561) -&nbsp; 【采用本地测试数据库】</h1>
        <button aria-label="最小化" className="flex w-[46px] justify-center">
          <svg className="size-[11px]" viewBox="0 0 11 11"><path d="M0 5.500h11" stroke="#999" /></svg>
        </button>
        <button aria-label="还原" className="flex w-[46px] justify-center">
          <svg className="size-[11px]" viewBox="0 0 11 11" fill="none" stroke="#888">
            <rect x="0.500" y="2.500" width="8" height="8" />
            <path d="M2.500 2.500v-2h8v8h-2" />
          </svg>
        </button>
        <button aria-label="关闭" className="flex w-[46px] justify-center">
          <svg className="size-[11px]" viewBox="0 0 11 11"><path d="M.5.5l10 10M10.500.5l-10 10" stroke="#888" /></svg>
        </button>
        <span className="w-0.5" />
      </header>

      <nav className="flex h-[25px] shrink-0 items-center gap-[21px] bg-[#ffa500] pl-[15px] pr-3.5 text-black">
        <button>工具(<u>T</u>)</button>
        <button>系统设置(<u>S</u>)</button>
        <button>帮助(<u>H</u>)</button>
        <button className="ml-auto flex items-center gap-[3px]">
          <svg className="size-4" viewBox="0 0 16 16">
            <rect width="16" height="16" rx="1" fill="#e2342c" />
            <path d="M0 0h16v7H0z" fill="#f07068" opacity="0.700" />
            <path d="M3.500 3.500l9 9M12.500 3.500l-9 9" stroke="#fff" strokeWidth="2" />
          </svg>
          <span>退出(<u>Q</u>)</span>
        </button>
      </nav>

      <div className="flex min-h-0 flex-1">
        <aside className="flex w-[206px] shrink-0 flex-col">
          <div className="flex h-[18px] items-center bg-linear-to-b from-[#dce8f4] to-[#bccbdb] pl-1.5 pr-1.5 text-black">
            <h2 className="flex-1 pt-0.5 leading-4">工具栏</h2>
            <svg className="mr-2.5 h-3 w-2" viewBox="0 0 8 12" fill="none" stroke="#000">
              <path d="M2 .5h4v6M2 .5v6M0 7h8M4 7v5M5 1v6" />
            </svg>
            <svg className="size-2.5" viewBox="0 0 10 10"><path d="M.5.5l9 9M9.500.5l-9 9" stroke="#000" strokeWidth="1.400" /></svg>
          </div>
          <div className="min-h-0 flex-1 border border-[#646464] bg-white pt-px">
            <Tree />
          </div>
        </aside>

        <main className="ml-1 flex min-w-0 flex-1 flex-col border-r-2 border-t border-[#a0a0a8]">
          <DocTabs />
          <div className="flex h-[27px] shrink-0 items-center gap-2.5 border-b border-[#6ba2ee] bg-linear-to-b from-[#e3efff] to-[#b9d7ff] pl-1.5 pr-1">
            <ToolButton icon={<CalendarIcon />} label="保存外观" menu />
            <ToolButton icon={<PlusIcon />} label="新增(F3)" />
            <ToolButton icon={<PencilIcon />} label="编辑(E)" />
            <ToolButton icon={<CrossIcon />} label="删除(D)" />
            <ToolButton icon={<RoundTickIcon />} label="确认发车(S)" menu />
            <ToolButton icon={<GrayBallIcon />} label="确认通关(P)" menu />
            <ToolButton icon={<TickIcon />} label="确认到达(A)" menu />
            <div className="ml-auto flex gap-2.5">
              <ToolButton icon={<SearchIcon />} label="查询(F5)" />
              <ToolButton icon={<TickIcon />} label="初审" menu />
              <ToolButton icon={<TickIcon />} label="复审" menu />
            </div>
          </div>

          <form className="flex shrink-0 flex-col gap-1 border-l-2 border-[#f0f0f0] pb-[5px] pl-[5px] pt-1 text-black">
            <div className="flex h-[21px] items-center">
              <label htmlFor="f-total" className="w-[57px]">总表号</label>
              <input id="f-total" className="h-[21px] w-[150px] border border-[#7a7a7a] bg-white outline-none" />
              <span className="ml-3.5" />
              <FilterSelect id="f-none" label="条件" value="-无-" width="w-[50px]" />
              <span className="ml-[5px]" />
              <FilterSelect id="f-field" label="日期字段" value="配载日期" width="w-[100px]" />
              <span className="ml-1" />
              <DateBox id="f-from" label="开始日期" value="2023-04-22" check width="w-[150px]" />
              <span className="w-[11px] text-center">-</span>
              <DateBox id="f-to" label="结束日期" value="2023-05-22" check={false} dim width="w-[150px]" />
              <button type="button" aria-label="添加条件" className="ml-0.5"><PlusIcon /></button>
            </div>
            <div className="flex h-[21px] items-center">
              <label htmlFor="f-six" className="w-[57px]">六联单号</label>
              <input id="f-six" className="h-[21px] w-[150px] border border-[#7a7a7a] bg-white outline-none" />
            </div>
          </form>

          <div className="flex min-h-0 flex-1 flex-col border-l-2 border-t border-[#a0a0a8] bg-white">
            <div className="min-h-0 flex-1 overflow-hidden">
              <MainGrid />
            </div>
            <div className="flex h-[31px] border-t border-[#c3c5d1] bg-linear-to-b from-[#e9eaee] to-[#e2e3e7] pl-[120px] pt-0.5">
              <div className="w-[100px]"><SumBox>共“20”票</SumBox></div>
            </div>
            <ScrollBar thumb="w-[85%]" />
          </div>
          <Pager />
          <div className="h-[42px] shrink-0 border border-[#7a7a7a] bg-[#efefef] shadow-[inset_0_0_0_1px_#fff]" />
          <div className="h-px bg-[#a0a0a8]" />
        </main>
      </div>

      <footer className="flex h-[31px] shrink-0 items-center bg-[#ffa500] pl-1 text-black">
        <span className="w-[92px]">当前登录用户：</span>
        <span className="w-[88px]">管理员(管理员)</span>
        <span className="w-[67px]">所在网点：</span>
        <span className="w-[57px]">深圳总部</span>
        <span className="w-14">网络延迟</span>
        <span className="w-[34px] text-[#008000]">4ms</span>
        <div className="flex gap-4 whitespace-nowrap text-[19px] font-bold text-[#32cd32]">
          <span>1.DB</span>
          <span>2.API</span>
          <span>3.API&gt;配置DB</span>
          <span>4.API&gt;应用DB</span>
        </div>
      </footer>
      <div className="flex h-2 shrink-0 bg-[#001a24] leading-4 text-white">
        <span className="w-[679px]" />
        <span className="w-[118px] bg-[#364850]" />
        <span className="w-[42px] bg-[#504f4e]" />
        <span className="flex-1 bg-[#242424]" />
        <span className="h-4 w-[153px] bg-[#242424] text-[13px]">17:25:08 星期</span>
        <span className="w-[21px] bg-[#000a18]" />
      </div>

      <Dialog />
      <Notes />
      <InputMethodBar />
      <div className="absolute right-0 top-[412px] flex h-[59px] w-2.5 flex-col justify-center gap-1 rounded-l bg-[#474a59] pl-1">
        <span className="h-7 bg-[repeating-linear-gradient(#22242e_0_2px,#474a59_2px_4px)]" />
        <span className="h-3.5 bg-[repeating-linear-gradient(#63d6a8_0_1px,#474a59_1px_2px)]" />
      </div>
    </div>
  )
}
